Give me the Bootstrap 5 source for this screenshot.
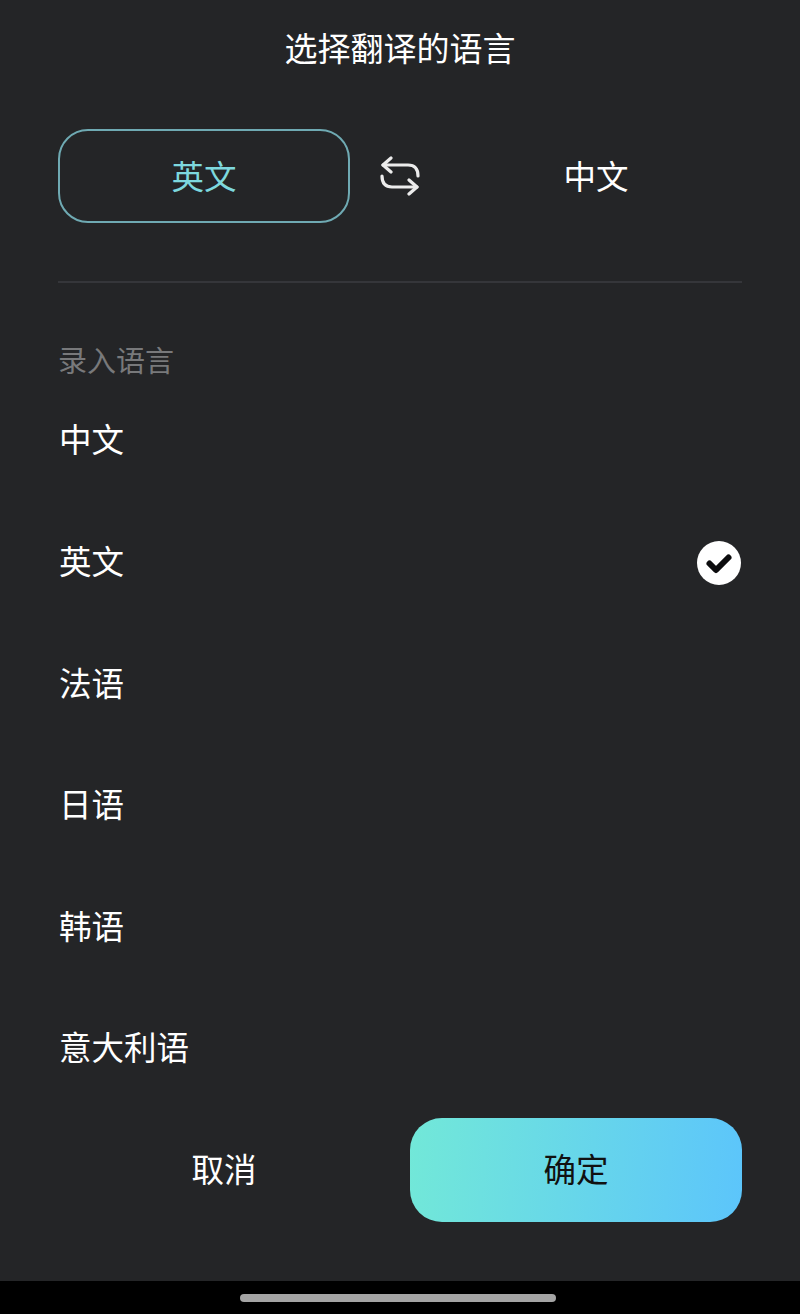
<!DOCTYPE html>
<html lang="zh">
<head>
<meta charset="utf-8">
<title>选择翻译的语言</title>
<link href="https://cdn.jsdelivr.net/npm/bootstrap@5.3.0/dist/css/bootstrap.min.css" rel="stylesheet">
<style>
html,body{margin:0;height:1314px;overflow:hidden;background:#000}
body{font-family:"Noto Sans CJK SC","Liberation Sans",sans-serif;color:#fff}
.sheet{height:1281px;background:#242527;padding:0 58px}
.sheet-title{font-size:33px;line-height:46px;font-weight:400;margin:0;padding-top:24px;text-align:center;height:129px;flex:0 0 129px}
.lang-row{height:94px;flex:0 0 94px}
.lang-pill{width:292px;height:94px;border:2px solid #6faab3;border-radius:30px;background:transparent;color:#7dd8de;font-size:32.5px;padding:0 0 2px}
.lang-pill:hover,.lang-pill:active{background:transparent;color:#7dd8de;border-color:#6faab3}
.swap-box{width:100px;margin-top:0}
.target-lang{width:292px;text-align:center;font-size:32.5px;background:transparent;border:0;color:#fff;padding:0 0 2px}
.rule{height:2px;background:#35363a;margin-top:58px;flex:0 0 2px}
.sect-label{font-size:29px;line-height:40px;color:#78797b;margin-top:56px}
.list-clip{height:742px;flex:0 0 742px;margin-top:-1px;margin-bottom:-2px}
.lang-item{height:121.6px;flex:0 0 121.6px;background:transparent;border:0;color:#fff;font-size:32.5px;padding:0 1px;display:flex;align-items:center;justify-content:space-between}
.tick-mark{margin-top:6px}
.foot-row{height:104px;flex:0 0 104px;display:flex;margin-top:0}
.cancel-btn{width:332px;font-size:32.5px;color:#fff;background:transparent;border:0;padding:0 0 3px}
.cancel-btn:hover{color:#fff}
.ok-btn{width:332px;margin-left:20px;height:104px;font-size:32.5px;color:#111;border:0;border-radius:32px;background:linear-gradient(95deg,#72e8d8,#5cc5fb);padding:0 0 3px}
.ok-btn:hover{color:#111;background:linear-gradient(95deg,#72e8d8,#5cc5fb)}
.nav-zone{height:33px;background:#000;display:flex;justify-content:center;padding-top:13px}
.nav-grip{width:316px;height:8px;border-radius:4px;background:#a5a5a5;margin-right:4px}
</style>
</head>
<body>
<main class="sheet d-flex flex-column">
  <h1 class="sheet-title">选择翻译的语言</h1>
  <div class="lang-row d-flex align-items-center">
    <button type="button" class="btn lang-pill">英文</button>
    <div class="swap-box d-flex justify-content-center">
      <svg width="40" height="40" viewBox="0 0 40 40" fill="none" stroke="#ececec" stroke-width="3.2" stroke-linecap="round" stroke-linejoin="round" aria-hidden="true">
        <path d="M11 2 L3 9 L11 16"/>
        <path d="M3 9 H28 Q38 9 38 20"/>
        <path d="M29 24 L37 31 L29 38"/>
        <path d="M37 31 H12 Q2 31 2 20"/>
      </svg>
    </div>
    <button type="button" class="btn target-lang">中文</button>
  </div>
  <div class="rule"></div>
  <div class="sect-label">录入语言</div>
  <div class="list-group list-group-flush list-clip">
    <div class="list-group-item lang-item"><span>中文</span></div>
    <div class="list-group-item lang-item"><span>英文</span>
      <svg class="tick-mark" width="44" height="44" viewBox="0 0 44 44" aria-hidden="true"><circle cx="22" cy="22" r="22" fill="#fff"/><path d="M12.5 22.5 L19 29 L31.5 16.5" fill="none" stroke="#0c0c0e" stroke-width="6" stroke-linecap="round" stroke-linejoin="round"/></svg>
    </div>
    <div class="list-group-item lang-item"><span>法语</span></div>
    <div class="list-group-item lang-item"><span>日语</span></div>
    <div class="list-group-item lang-item"><span>韩语</span></div>
    <div class="list-group-item lang-item"><span>意大利语</span></div>
  </div>
  <div class="foot-row">
    <button type="button" class="btn cancel-btn">取消</button>
    <button type="button" class="btn ok-btn">确定</button>
  </div>
</main>
<div class="nav-zone"><div class="nav-grip"></div></div>
<script src="https://cdn.jsdelivr.net/npm/bootstrap@5.3.0/dist/js/bootstrap.bundle.min.js"></script>
</body>
</html>
